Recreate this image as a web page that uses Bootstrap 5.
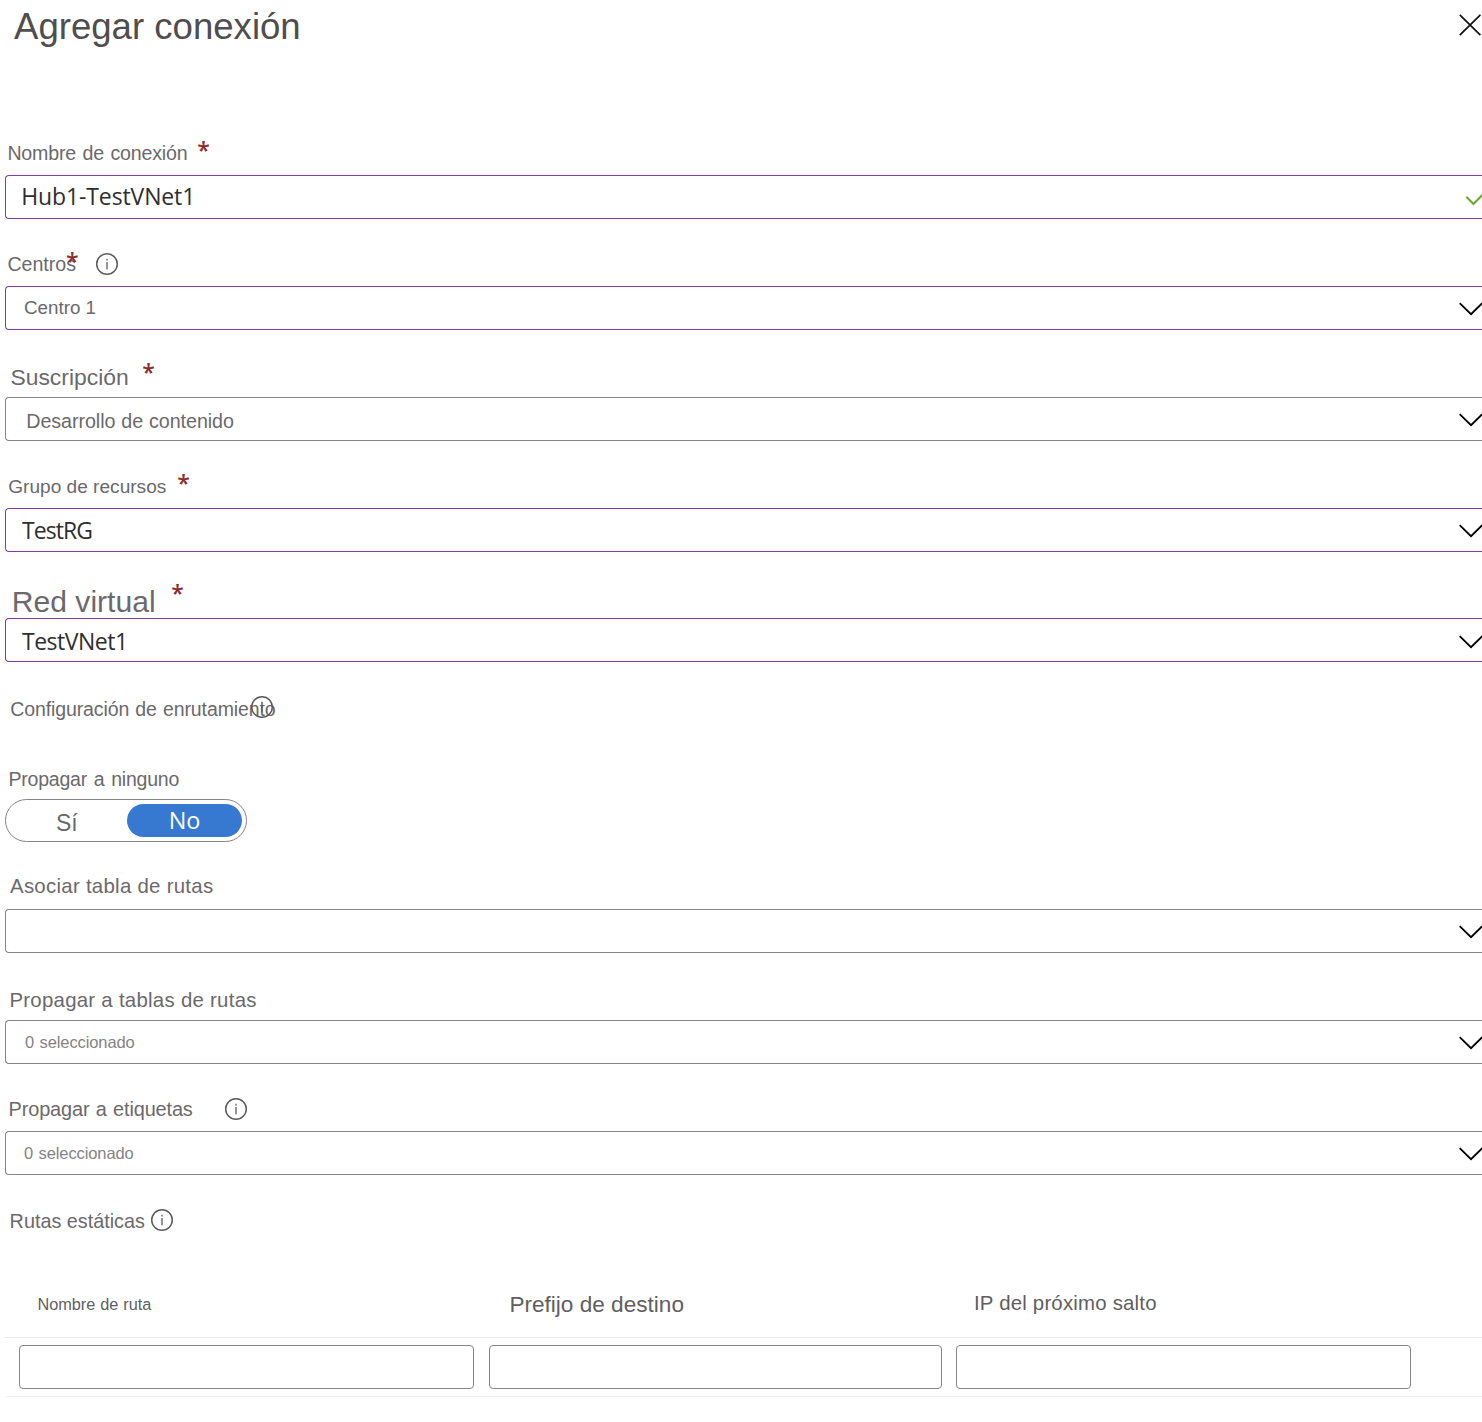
<!DOCTYPE html>
<html lang="es">
<head>
<meta charset="utf-8">
<meta name="viewport" content="width=device-width, initial-scale=1">
<title>Agregar conexión</title>
<link href="https://cdn.jsdelivr.net/npm/bootstrap@5.3.0/dist/css/bootstrap.min.css" rel="stylesheet">
<style>
  body { font-family: "Liberation Sans", Arial, sans-serif; color: #6b696b; background: #fff; overflow: hidden; }
  .blade { padding-left: 5px; height: 1422px; overflow: hidden; }
  .blade-head { height: 119px; padding: 13px 0 0 9px; }
  .blade-title { font-size: 36.6px; line-height: 1; margin: -4px 0 0; font-weight: 400; color: #4f4d4e; }
  .icon-x { width: 24px; height: 24px; }

  /* label row: contents hang from the top edge of the control below */
  .lab-row { display: flex; align-items: flex-end; height: 67px; line-height: 1; white-space: nowrap; }
  .lab-row.first { height: 56px; }
  .lab-row.tight { height: 66px; }
  .lab-row.loose { height: 70px; }
  .lab { display: block; flex: none; font-size: var(--fs); letter-spacing: var(--ls, 0); word-spacing: var(--ws, 0); margin-left: var(--x); width: var(--w, auto);
         margin-bottom: calc(var(--b) - .1535em); }
  .req { flex: none; font-family: "Open Sans", "Noto Sans", sans-serif; font-weight: 600; font-size: 23px; color: #8f2a2a; width: 13px; margin-bottom: 13px; }
  .info { flex: none; width: 24px; height: 24px; margin-bottom: 10px; }

  .l-name { --fs: 19.6px; --ls: -.19px; --ws: 1.3px; --x: 2.4px; --w: 189.9px; --b: 14px; }
  .l-hubs { --fs: 19.6px; --x: 2.4px; --w: 58.6px; --b: 14px; }
  .l-subs { --fs: 22.9px; --x: 5.4px; --w: 131.8px; --b: 12px; }
  .l-group { --fs: 19.1px; --x: 3.2px; --w: 169px; --b: 15px; }
  .l-vnet { --fs: 30.1px; --x: 6.8px; --w: 159.4px; --b: 6px; }
  .l-routing { --fs: 19.5px; --ls: -.1px; --ws: .8px; --x: 5.2px; --w: 239.8px; --b: 13px; }
  .l-none { --fs: 19.5px; --ls: -.22px; --ws: 1.6px; --x: 3.5px; --b: 13px; }
  .l-assoc { --fs: 20.4px; --ls: .28px; --x: 5px; --b: 16px; }
  .l-tables { --fs: 20.4px; --ls: .27px; --x: 4.4px; --b: 13px; }
  .l-tags { --fs: 19.9px; --ls: -.13px; --ws: 1px; --x: 3.6px; --w: 215.4px; --b: 14px; }
  .l-static { --fs: 19.8px; --x: 4.6px; --w: 140.4px; --b: 13px; }

  .form-control.field { height: 44px; padding: 0; border: 1px solid #868486; border-right: 0; border-radius: 4px 0 0 4px; display: flex; color: inherit; background: #fff; line-height: 42px; white-space: nowrap; }
  .form-control.field.edited { border-color: #7f3ba6; }
  .field svg { flex: none; width: 24px; height: 42px; margin-left: auto; }
  .field svg.low { margin-top: 1px; }
  .val { font-size: var(--fs); letter-spacing: var(--ls, 0); word-spacing: var(--ws, 0); margin: var(--t, 0) 0 0 var(--x); height: 42px; }
  .segoe { font-family: "Open Sans", "Noto Sans", sans-serif; color: #2f2e2e; --fs: 23px; --x: 16px; }
  .v-name { --t: -1px; --x: 15.3px; --ls: -.13px; }
  .v-group { --ls: -.95px; }
  .v-vnet { --t: 1px; --ls: -.5px; }
  .v-hub { --fs: 18.8px; --x: 18px; }
  .v-subs { --fs: 19.7px; --x: 20.3px; --t: 2px; --ls: -.07px; --ws: .6px; }
  .v-zero { --fs: 16.5px; --x: 19px; --ls: -.1px; --ws: 1px; color: #858385; }
  .v-zero2 { --x: 18px; }

  .switch { width: 242px; height: 43px; border: 1px solid #868486; border-radius: 22px; padding: 4px 4px 0 50px; display: flex; }
  .opt-yes { font-size: 23px; line-height: 41px; margin-top: -1px; height: 36px; width: 71px; }
  .opt-no { font-family: "Open Sans", "Noto Sans", sans-serif; width: 115px; height: 33px; line-height: 33px; border-radius: 17px; background: #3779d0; color: #fff; font-size: 23.4px; text-align: center; }

  .routes-head { height: 96px; border-bottom: 1px solid #eaeaea; display: flex; line-height: 1; }
  .routes-row { height: 59px; border-bottom: 1px solid #f0f0f0; padding: 7px 0 0 14px; }
  .routes-row .form-control { height: 44px; flex: none; width: 455px; padding: 0 12px; border: 1px solid #868486; border-radius: 4px; background: #fff; }
  .routes-row .mid { width: 453px; margin: 0 14px 0 15px; }
  .hcell { flex: none; font-size: var(--fs); letter-spacing: var(--ls, 0); word-spacing: var(--ws, 0); padding: var(--t) 0 0 var(--x); color: #605e60; white-space: nowrap; }
  .h-name { --fs: 16.3px; --ls: -.05px; --ws: .6px; --t: 54px; --x: 32.6px; width: 484px; }
  .h-prefix { --fs: 22.6px; --t: 52px; --x: 20.4px; width: 467px; }
  .h-ip { --fs: 20.4px; --ls: .2px; --t: 51px; --x: 18px; }
</style>
</head>
<body>
<svg class="d-none" aria-hidden="true">
  <symbol id="chev" viewBox="0 0 24 42"><path d="M1.7 16.2 13 27.2 24.2 16.2" fill="none" stroke="#000" stroke-width="1.8"/></symbol>
  <symbol id="inf" viewBox="0 0 24 24"><circle cx="12" cy="12" r="10.3" fill="none" stroke="#5c5a5c" stroke-width="1.5"/><path d="M12 10v7.2M12 6.8v1.7" fill="none" stroke="#5c5a5c" stroke-width="1.3"/></symbol>
</svg>
<main class="blade">
  <header class="blade-head d-flex justify-content-between align-items-start">
    <h1 class="blade-title">Agregar conexión</h1>
    <svg class="icon-x" viewBox="0 0 24 24"><path d="M1.8 1.8 22.4 22.2M22.4 1.8 1.8 22.2" fill="none" stroke="#111" stroke-width="1.7"/></svg>
  </header>

  <div class="lab-row first"><label class="lab l-name">Nombre de conexión</label><span class="req">*</span></div>
  <div class="form-control field edited"><span class="val segoe v-name">Hub1-TestVNet1</span>
    <svg viewBox="0 0 24 42"><path d="M8.3 20.8 15.5 28 24.3 19" fill="none" stroke="#6aa52c" stroke-width="2"/></svg></div>

  <div class="lab-row"><label class="lab l-hubs">Centros</label><span class="req">*</span>
    <svg class="info ms-3"><use href="#inf"/></svg></div>
  <div class="form-control field edited"><span class="val v-hub">Centro 1</span><svg><use href="#chev"/></svg></div>

  <div class="lab-row"><label class="lab l-subs">Suscripción</label><span class="req">*</span></div>
  <div class="form-control field"><span class="val v-subs">Desarrollo de contenido</span><svg><use href="#chev"/></svg></div>

  <div class="lab-row"><label class="lab l-group">Grupo de recursos</label><span class="req">*</span></div>
  <div class="form-control field edited"><span class="val segoe v-group">TestRG</span><svg><use href="#chev"/></svg></div>

  <div class="lab-row tight"><label class="lab l-vnet">Red virtual</label><span class="req">*</span></div>
  <div class="form-control field edited"><span class="val segoe v-vnet">TestVNet1</span><svg class="low"><use href="#chev"/></svg></div>

  <div class="lab-row"><span class="lab l-routing">Configuración de enrutamiento</span><svg class="info"><use href="#inf"/></svg></div>
  <div class="lab-row loose"><label class="lab l-none">Propagar a ninguno</label></div>
  <div class="switch"><span class="opt-yes">Sí</span><span class="opt-no">No</span></div>

  <div class="lab-row"><label class="lab l-assoc">Asociar tabla de rutas</label></div>
  <div class="form-control field"><svg><use href="#chev"/></svg></div>

  <div class="lab-row"><label class="lab l-tables">Propagar a tablas de rutas</label></div>
  <div class="form-control field"><span class="val v-zero">0 seleccionado</span><svg><use href="#chev"/></svg></div>

  <div class="lab-row"><label class="lab l-tags">Propagar a etiquetas</label><svg class="info"><use href="#inf"/></svg></div>
  <div class="form-control field"><span class="val v-zero v-zero2">0 seleccionado</span><svg><use href="#chev"/></svg></div>

  <div class="lab-row"><span class="lab l-static">Rutas estáticas</span><svg class="info"><use href="#inf"/></svg></div>
  <section>
    <div class="routes-head">
      <div class="hcell h-name">Nombre de ruta</div>
      <div class="hcell h-prefix">Prefijo de destino</div>
      <div class="hcell h-ip">IP del próximo salto</div>
    </div>
    <div class="routes-row d-flex">
      <input class="form-control" type="text" aria-label="Nombre de ruta">
      <input class="form-control mid" type="text" aria-label="Prefijo de destino">
      <input class="form-control" type="text" aria-label="IP del próximo salto">
    </div>
  </section>
</main>
<script src="https://cdn.jsdelivr.net/npm/bootstrap@5.3.0/dist/js/bootstrap.bundle.min.js"></script>
</body>
</html>
